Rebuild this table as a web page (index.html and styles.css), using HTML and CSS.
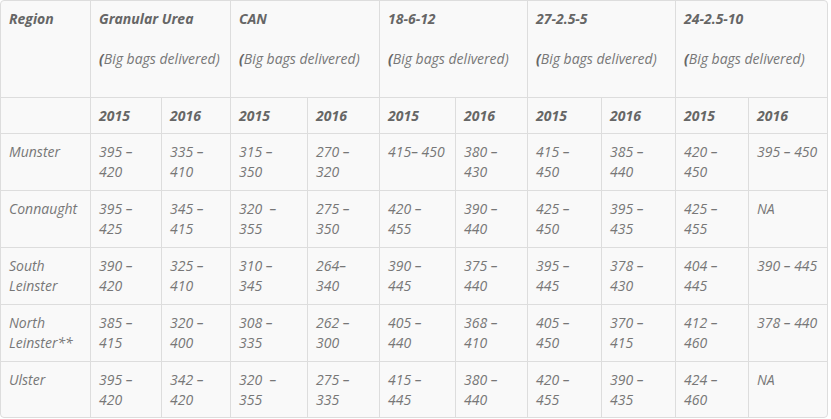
FILE: index.html
```html
<!DOCTYPE html>
<html lang="en">
<head>
<meta charset="utf-8">
<title>Fertiliser prices</title>
<link rel="stylesheet" href="styles.css">
</head>
<body>
<div class="wrap">
  <div class="grid">
    <div class="c h">Region</div>
    <div class="c h span2">Granular Urea<br><br><span class="sub"><b>(</b>Big bags delivered)</span></div>
    <div class="c h span2">CAN<br><br><span class="sub"><b>(</b>Big bags delivered)</span></div>
    <div class="c h span2">18-6-12<br><br><span class="sub"><b>(</b>Big bags delivered)</span></div>
    <div class="c h span2">27-2.5-5<br><br><span class="sub"><b>(</b>Big bags delivered)</span></div>
    <div class="c h span2 last">24-2.5-10<br><br><span class="sub"><b>(</b>Big bags delivered)</span></div>

    <div class="c h yr"></div>
    <div class="c h yr">2015</div><div class="c h yr">2016</div>
    <div class="c h yr">2015</div><div class="c h yr">2016</div>
    <div class="c h yr">2015</div><div class="c h yr">2016</div>
    <div class="c h yr">2015</div><div class="c h yr">2016</div>
    <div class="c h yr">2015</div><div class="c h yr last">2016</div>

    <div class="c">Munster</div>
    <div class="c">395 –<br>420</div><div class="c">335 –<br>410</div>
    <div class="c">315 –<br>350</div><div class="c">270 –<br>320</div>
    <div class="c">415– 450</div><div class="c">380 –<br>430</div>
    <div class="c">415 –<br>450</div><div class="c">385 –<br>440</div>
    <div class="c">420 –<br>450</div><div class="c last">395 – 450</div>

    <div class="c">Connaught</div>
    <div class="c">395 –<br>425</div><div class="c">345 –<br>415</div>
    <div class="c">320 &nbsp;–<br>355</div><div class="c">275 –<br>350</div>
    <div class="c">420 –<br>455</div><div class="c">390 –<br>440</div>
    <div class="c">425 –<br>450</div><div class="c">395 –<br>435</div>
    <div class="c">425 –<br>455</div><div class="c last">NA</div>

    <div class="c">South<br>Leinster</div>
    <div class="c">390 –<br>420</div><div class="c">325 –<br>410</div>
    <div class="c">310 –<br>345</div><div class="c">264–<br>340</div>
    <div class="c">390 –<br>445</div><div class="c">375 –<br>440</div>
    <div class="c">395 –<br>445</div><div class="c">378 –<br>430</div>
    <div class="c">404 –<br>445</div><div class="c last">390 – 445</div>

    <div class="c">North<br>Leinster**</div>
    <div class="c">385 –<br>415</div><div class="c">320 –<br>400</div>
    <div class="c">308 –<br>335</div><div class="c">262 –<br>300</div>
    <div class="c">405 –<br>440</div><div class="c">368 –<br>410</div>
    <div class="c">405 –<br>450</div><div class="c">370 –<br>415</div>
    <div class="c">412 –<br>460</div><div class="c last">378 – 440</div>

    <div class="c bot">Ulster</div>
    <div class="c bot">395 –<br>420</div><div class="c bot">342 –<br>420</div>
    <div class="c bot">320 &nbsp;–<br>355</div><div class="c bot">275 –<br>335</div>
    <div class="c bot">415 –<br>445</div><div class="c bot">380 –<br>440</div>
    <div class="c bot">420 –<br>455</div><div class="c bot">390 –<br>435</div>
    <div class="c bot">424 –<br>460</div><div class="c bot last">NA</div>
  </div>
</div>
</body>
</html>
```

FILE: styles.css
```css
html, body {
  margin: 0;
  padding: 0;
  background: #ffffff;
}

.wrap {
  width: 826px;
  border: 1px solid #dddddd;
  border-radius: 4px;
  background: #f9f9f9;
  overflow: hidden;
}

.grid {
  display: grid;
  grid-template-columns: 90px 71px 69px 77px 72px 76px 72px 74px 74px 73px 78px;
  font-family: "Open Sans", "DejaVu Sans", sans-serif;
  font-style: italic;
  font-size: 14px;
  line-height: 20px;
  color: #777777;
}

.c {
  box-sizing: border-box;
  padding: 8px 8px;
  border-right: 1px solid #dddddd;
  border-bottom: 1px solid #dddddd;
}

.c.last {
  border-right: none;
}

.c.yr {
  padding-bottom: 7px;
}

.c.bot {
  border-bottom: none;
  padding-bottom: 7px;
}

.span2 {
  grid-column: span 2;
  padding-bottom: 28px;
}

.h {
  font-weight: 700;
  color: #666666;
}

.sub {
  font-weight: 400;
  color: #777777;
}

.sub b {
  font-weight: 700;
  color: #666666;
}
```
